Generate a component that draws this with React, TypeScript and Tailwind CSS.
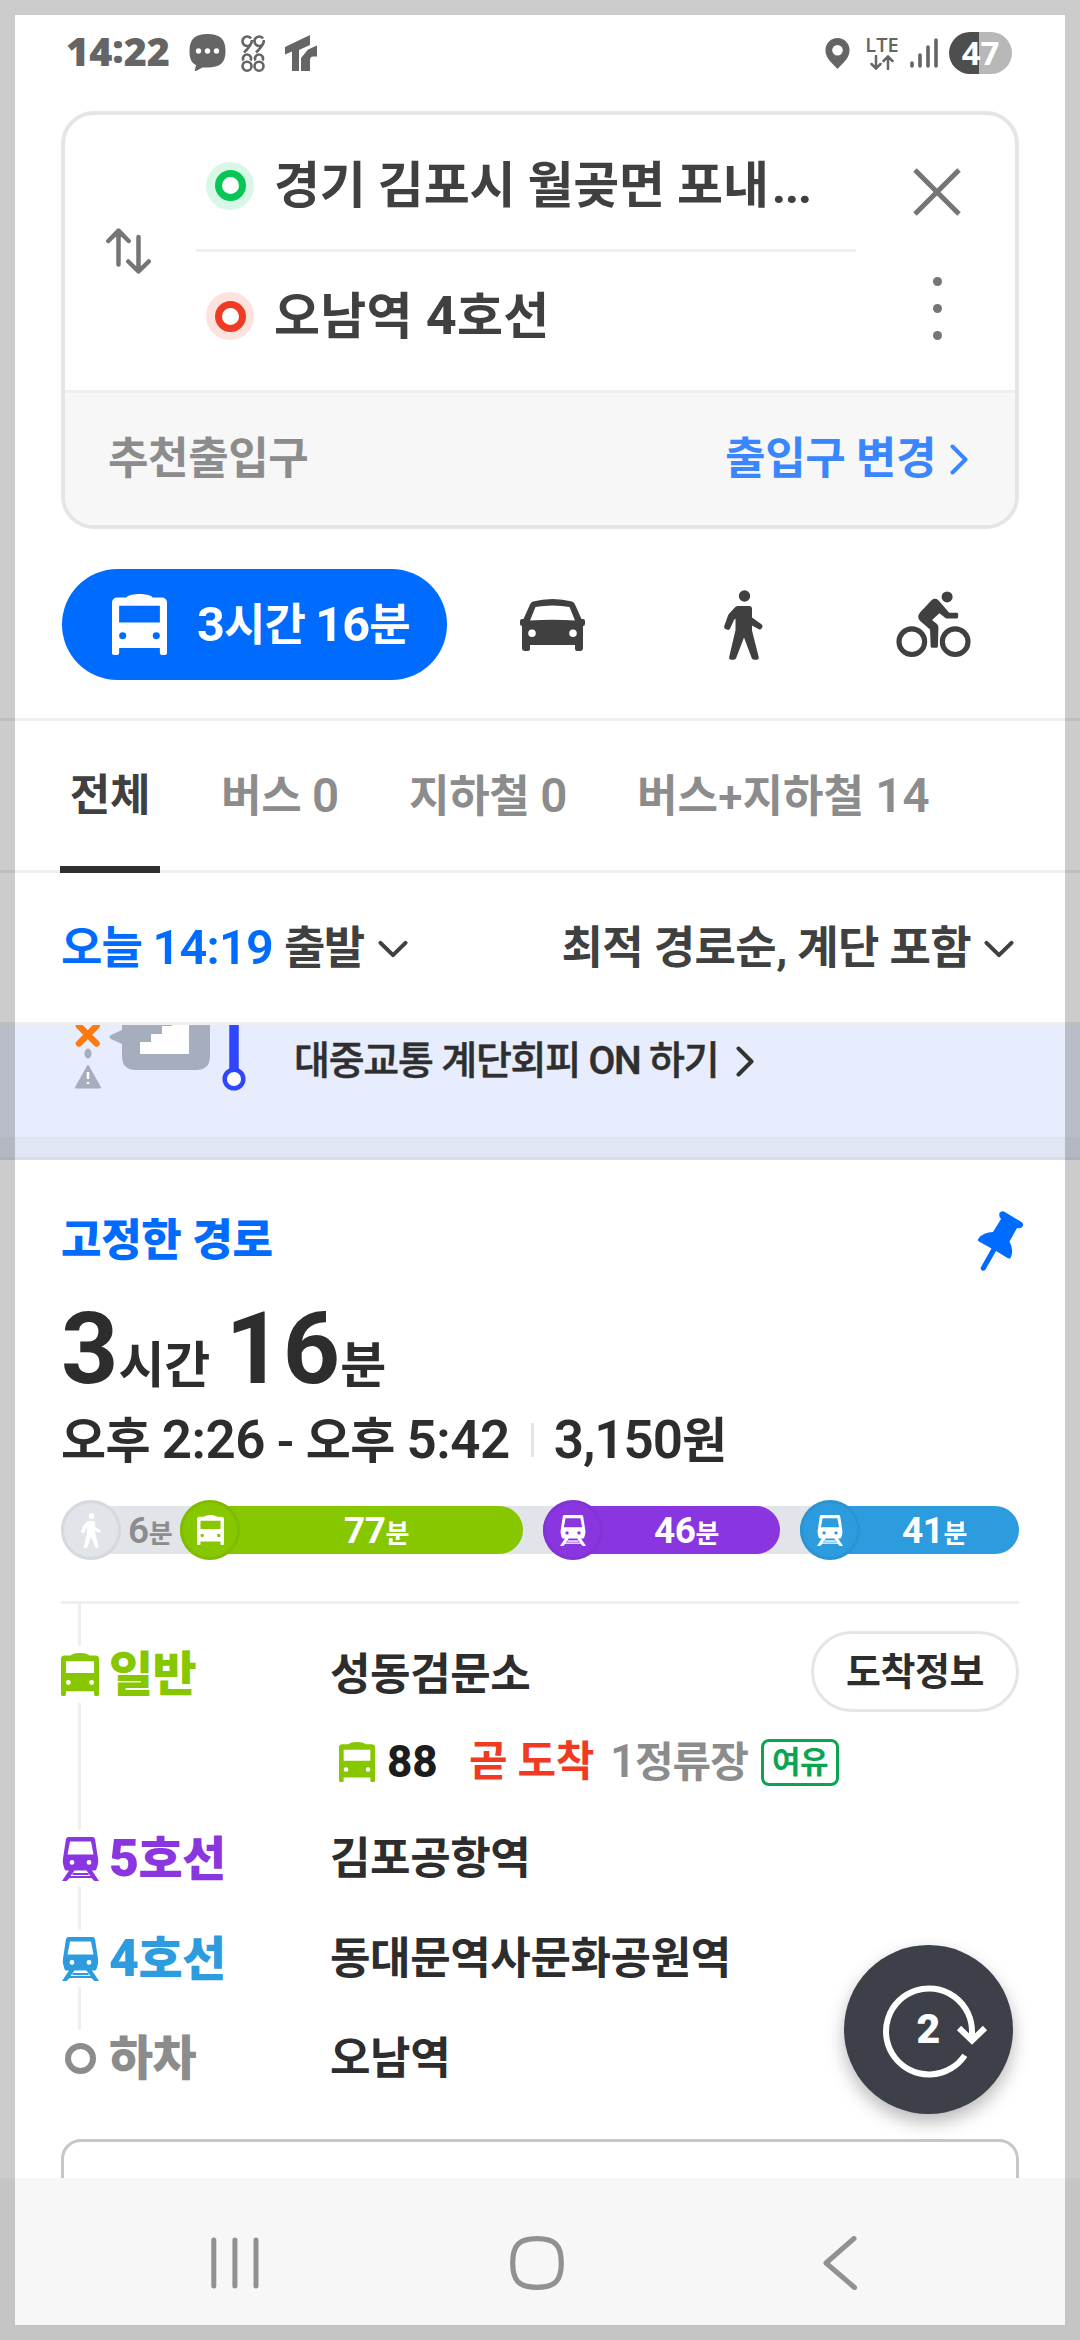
import type { ReactNode } from "react";

type IconProps = { className?: string };

function BusIcon({ className }: IconProps) {
  return (
    <svg viewBox="0 0 54 62" className={className} fill="currentColor" preserveAspectRatio="none">
      <path
        fillRule="evenodd"
        d="M14 3.500C16 1 22 0 27 0s11 1 13 3.500h9a5 5 0 0 1 5 5V60a2 2 0 0 1-2 2h-3a2 2 0 0 1-2-2v-5H7v5a2 2 0 0 1-2 2H2a2 2 0 0 1-2-2V8.500a5 5 0 0 1 5-5ZM7 12v17h40V12ZM10.500 39a3.500 3.500 0 1 0 0 7 3.500 3.500 0 0 0 0-7Zm33 0a3.500 3.500 0 1 0 0 7 3.500 3.500 0 0 0 0-7Z"
      />
    </svg>
  );
}

function TrainIcon({ className }: IconProps) {
  return (
    <svg viewBox="0 0 37 44" className={className} fill="currentColor">
      <path
        fillRule="evenodd"
        d="M6.500 0h24q2 0 2.500 2L36 21.500q.4 3-.2 6L34.500 32q-.5 1.500-2 1.500H30L37 44h-4.500l-3.200-3H7.700l-3.200 3H0l7-10.500H4.500q-1.500 0-2-1.500L1.200 27.500q-.6-3-.2-6L4 2Q4.500 0 6.500 0ZM8 4.500 5.500 17.500h26L29 4.500ZM10 23a2.400 2.400 0 1 0 0 4.800A2.400 2.400 0 0 0 10 23Zm17 0a2.400 2.400 0 1 0 0 4.800 2.400 2.400 0 0 0 0-4.800ZM12.500 33.500 8.500 39h20L24.500 33.500Z"
      />
      <path d="M10.500 36h16v2h-16Z" />
    </svg>
  );
}

function CarIcon({ className }: IconProps) {
  return (
    <svg viewBox="0 0 65 52" className={className} fill="currentColor">
      <path
        fillRule="evenodd"
        d="M13 2.500Q22 0 32.500 0T52 2.500q2 .5 3 3L61.500 20H63q2 0 2 2v3q0 2-2 2v22q0 3-3 3h-3q-2 0-2-2v-4H10v4q0 2-2 2H5q-3 0-3-3V27q-2 0-2-2v-3q0-2 2-2h1.500L10 5.500q1-2.500 3-3ZM15.500 8 10 21.500q11-.8 22.500-.8t22.500.8L49.500 8Q42 6.500 32.500 6.500T15.500 8ZM12 30.500a3.800 3.800 0 1 0 0 7.600 3.800 3.800 0 0 0 0-7.600Zm41 0a3.800 3.800 0 1 0 0 7.600 3.800 3.800 0 0 0 0-7.600Z"
      />
    </svg>
  );
}

function WalkIcon({ className }: IconProps) {
  return (
    <svg viewBox="0 0 39 70" className={className} fill="currentColor">
      <circle cx="20.500" cy="6" r="5.700" />
      <path d="M14 16h11q3 0 3 3v8.500l9.500 6.800q1.600 1.200.7 3l-.7 1.200q-1 1.500-2.600.7L28 35.500v5L34.700 67q.5 2.800-2 2.800h-2.500q-2 0-2.500-1.800L20 47.500 12.200 68q-.6 1.800-2.500 1.800H7.200q-2.500 0-2-2.800L11.500 40V28.500L10 30 6 38.800q-.8 1.500-2.500 1L1.300 39Q-.3 38 .2 36.200L4 25.500q.4-1 1.300-2l6-6.400Q12.500 16 14 16Z" />
    </svg>
  );
}

function BikeIcon({ className }: IconProps) {
  return (
    <svg viewBox="0 0 75 68" className={className} fill="currentColor">
      <circle cx="51.300" cy="6" r="5.600" />
      <path d="M35.500 9.300q3.500-3 7 0L53.500 22H61q1.500 0 1.500 1.500v3q0 1.500-1.500 1.500H51q-1 0-2-1l-5.500-4.500L36 29.500l5 4q1.500 1.300 1.500 3.500l-.5 19q0 1.700-1.700 1.700h-4q-1.700 0-1.700-1.700L34 39 24 30.500q-4-4 0-9Z" />
      <circle cx="15.500" cy="51.500" r="13" fill="none" stroke="currentColor" strokeWidth="5.200" />
      <circle cx="59.500" cy="51.500" r="13" fill="none" stroke="currentColor" strokeWidth="5.200" />
    </svg>
  );
}

function Chevron({ className }: IconProps) {
  return (
    <svg viewBox="0 0 18 31" className={className} fill="none" stroke="currentColor" strokeLinecap="round" strokeLinejoin="round">
      <path d="M2.500 2.500 15.500 15.500 2.500 28.500" strokeWidth="4" />
    </svg>
  );
}

function ChevronDown({ className }: IconProps) {
  return (
    <svg viewBox="0 0 30 18" className={className} fill="none" stroke="currentColor" strokeLinecap="round" strokeLinejoin="round">
      <path d="M2.500 2.800 15 15.200 27.500 2.800" strokeWidth="4" />
    </svg>
  );
}

// digits are set a little larger than the hangul next to them
function Mixed({ text }: { text: string }) {
  return (
    <span className="whitespace-pre">
      {text.split(/([0-9:,]+)/).map((part, i) =>
        i % 2 ? (
          <span key={i} className="text-[1.08em]">
            {part}
          </span>
        ) : (
          part
        )
      )}
    </span>
  );
}

function StatusBar() {
  return (
    <div className="flex h-[111px] items-start justify-between pl-[66px] pr-[68px] pt-[32px] font-['Open_Sans',sans-serif] text-[#656565]">
      <div className="flex h-[42px] items-center">
        <span className="w-[123px] pb-[3px] text-[39.500px] font-extrabold leading-none">
          14<span className="inline-block -translate-y-[3px]">:</span>22
        </span>
        <svg viewBox="0 0 37 38" className="mr-[15px] h-[38px] w-[37px]">
          <path
            fill="currentColor"
            d="M18.500 0C31 0 36.500 5 36.500 17S31 33.500 18.500 33.500q-3 0-5 0L7 37q-2 .5-1-1.500l1-4.500C2 28.500.5 24 .5 17 .5 5 6 0 18.500 0Z"
          />
          <g fill="#fff">
            <circle cx="9.500" cy="17" r="2.700" />
            <circle cx="18.500" cy="17" r="2.700" />
            <circle cx="27.500" cy="17" r="2.700" />
          </g>
        </svg>
        <svg viewBox="0 0 24 37" className="mr-[20px] h-[37px] w-[24px]" fill="none" stroke="currentColor" strokeWidth="2.600">
          <path d="M10 3.500A4.700 4.700 0 1 0 10 9M22 3.500A4.700 4.700 0 1 0 22 9M11 5q0 5-8 12.500M23 5q0 5-8 12.500" />
          <circle cx="6" cy="31.200" r="4.500" />
          <circle cx="18" cy="31.200" r="4.500" />
          <path d="M2.500 25.500A4 4 0 1 1 9.500 25.500M14.500 25.500A4 4 0 1 1 21.500 25.500" />
        </svg>
        <svg viewBox="0 0 32 36" className="h-[36px] w-[32px]" fill="currentColor">
          <path d="M0 12 25 0v10L14 15v21H7V16.500L0 19.500Z" />
          <path d="M32 10.500v11h-4q-3 0-3 4V36h-9V23l7-8.500Z" />
        </svg>
      </div>
      <div className="flex h-[42px] items-center">
        <svg viewBox="0 0 25 31" className="mr-[16px] h-[31px] w-[25px]">
          <path
            fill="currentColor"
            fillRule="evenodd"
            d="M12.500 0A12 12 0 0 0 .5 12.500c0 8 8 14 12 18.500 4-4.500 12-10.500 12-18.500A12 12 0 0 0 12.500 0Zm0 7a5.300 5.300 0 1 1 0 10.600 5.300 5.300 0 0 1 0-10.600Z"
          />
        </svg>
        <div className="mr-[12px] flex w-[32px] flex-col items-center">
          <span className="text-[20px] font-semibold leading-[17px]">LTE</span>
          <svg viewBox="0 0 24 15" className="mt-[2px] h-[15px] w-[24px]" fill="none" stroke="currentColor" strokeWidth="2.500" strokeLinecap="round">
            <path d="M6 1v12M1.500 9 6 13.500 10.500 9M18 14V2M13.500 6 18 1.500 22.500 6" />
          </svg>
        </div>
        <svg viewBox="0 0 28 30" className="mr-[11px] h-[30px] w-[28px]" stroke="currentColor" strokeWidth="3.600" strokeLinecap="round">
          <path d="M2 25v3M10 17v11M18 9v19M26 2v26" />
        </svg>
        <div className="flex h-[42px] w-[63px] items-center justify-center rounded-full bg-[linear-gradient(90deg,#4e4e4e_30px,#b8b8b8_30px)] pb-[2px] text-[33px] font-bold leading-none text-white">
          47
        </div>
      </div>
    </div>
  );
}

function SearchCard() {
  return (
    <div className="mx-[61px] flex h-[418px] flex-col overflow-hidden rounded-[33px] border-4 border-[#e5e5e5]">
      <div className="flex h-[275px] text-[50px] font-bold leading-none tracking-[-0.2px] text-[#404040]">
        <div className="flex w-[131px] flex-col pl-[40px] pt-[113px]">
          <svg viewBox="0 0 46 46" className="size-[46px]" fill="none" stroke="#757575" strokeWidth="4.500" strokeLinecap="round" strokeLinejoin="round">
            <path d="M13.500 36.500V3M3.300 13 13.500 2.700 23.700 13M33.500 9v34M23.300 33.500 33.500 43.500 43.700 33.500" />
          </svg>
        </div>
        <div className="flex w-[660px] flex-col">
          <div className="flex h-[134px] items-center pl-[10px] pt-[7px]">
            <span className="mr-[20px] flex size-[48px] items-center justify-center rounded-full bg-[#d9f7e6]">
              <span className="size-[31px] rounded-full border-[7px] border-[#06c755] bg-white" />
            </span>
            <span className="whitespace-nowrap">
              경기 김포시 월곶면 포내<span className="ml-[3px] tracking-[-1.500px]">...</span>
            </span>
          </div>
          <div className="h-[3px] shrink-0 bg-[#efefef]" />
          <div className="flex h-[128px] items-center pl-[10px]">
            <span className="mr-[20px] flex size-[48px] items-center justify-center rounded-full bg-[#fde2de]">
              <span className="size-[31px] rounded-full border-[7px] border-[#f03a24] bg-white" />
            </span>
            <span className="tracking-[0.3px]">
              <Mixed text="오남역 4호선" />
            </span>
          </div>
        </div>
        <div className="flex flex-1 flex-col items-center pl-[3px] pt-[53px]">
          <svg viewBox="0 0 48 48" className="size-[48px]" stroke="#757575" strokeWidth="5">
            <path d="M2 2 46 46M46 2 2 46" />
          </svg>
          <div className="mt-[61px] flex flex-col gap-[18px]">
            <span className="size-[9px] rounded-full bg-[#757575]" />
            <span className="size-[9px] rounded-full bg-[#757575]" />
            <span className="size-[9px] rounded-full bg-[#757575]" />
          </div>
        </div>
      </div>
      <div className="flex flex-1 items-center justify-between border-t-[3px] border-[#efefef] bg-[#f7f7f7] pl-[43px] pr-[47px] text-[44px] font-bold leading-none tracking-[-0.4px]">
        <span className="text-[#8c8c8c]">추천출입구</span>
        <span className="flex items-center text-[#3a86ff]">
          출입구 변경
          <Chevron className="ml-[14px] h-[31px] w-[18px]" />
        </span>
      </div>
    </div>
  );
}

function ModeBar() {
  return (
    <div className="flex h-[192px] items-start border-b-[3px] border-[#efefef] pl-[62px] pt-[40px] text-[#404040]">
      <button className="flex h-[111px] w-[385px] items-center rounded-full bg-[#006bff] pl-[50px] text-[45px] font-bold leading-none tracking-[-0.9px] text-white">
        <BusIcon className="mr-[30px] h-[61px] w-[55px]" />
        <span className="pt-[2px]">
          <Mixed text="3시간 16분" />
        </span>
      </button>
      <CarIcon className="ml-[73px] mt-[30px] h-[52px] w-[65px]" />
      <WalkIcon className="ml-[139px] mt-[21px] h-[70px] w-[39px]" />
      <BikeIcon className="ml-[133px] mt-[22px] h-[67px] w-[75px]" />
    </div>
  );
}

function Tabs() {
  return (
    <div className="flex h-[152px] border-b-[3px] border-[#efefef] pl-[60px] text-[44px] font-semibold leading-none tracking-[-0.3px] text-[#8c8c8c]">
      <div className="-mb-[3px] flex w-[100px] items-center justify-center border-b-[7px] border-[#2f2f2f] pt-[5px] font-bold text-[#404040]">
        전체
      </div>
      <div className="flex w-[187px] items-center pl-[61px] pt-[2px]">
        <Mixed text="버스 0" />
      </div>
      <div className="flex w-[228px] items-center pl-[62px] pt-[2px]">
        <Mixed text="지하철 0" />
      </div>
      <div className="flex items-center pl-[62px] pt-[2px] tracking-[0.1px]">
        <Mixed text="버스+지하철 14" />
      </div>
    </div>
  );
}

function FilterRow() {
  return (
    <div className="flex h-[152px] items-center justify-between border-b-[3px] border-[#efefef] pl-[61px] pr-[66px] pt-[2px] text-[45px] font-bold leading-none tracking-[-0.6px] text-[#404040]">
      <span className="flex items-center">
        <span className="mr-[11px] font-semibold tracking-[-0.8px] text-[#006bff]">
          <Mixed text="오늘 14:19" />
        </span>
        <span className="tracking-[-1.500px]">출발</span>
        <ChevronDown className="ml-[14px] h-[18px] w-[30px]" />
      </span>
      <span className="flex items-center">
        최적 경로순, 계단 포함
        <ChevronDown className="ml-[13px] h-[18px] w-[30px]" />
      </span>
    </div>
  );
}

function Banner() {
  return (
    <div className="flex h-[135px] flex-col bg-[#e7edfc]">
      <div className="flex h-[112px] items-start">
        <svg viewBox="0 0 200 90" className="ml-[60px] h-[90px] w-[200px]">
          <path d="M19 1 36.500 18.500M36.500 1 19 18.500" stroke="#ff7a0d" strokeWidth="6.500" strokeLinecap="round" />
          <ellipse cx="28" cy="28.500" rx="3.500" ry="5" fill="#a6adbd" />
          <path d="M28 41 40 62.500H16Z" fill="#a6adbd" stroke="#a6adbd" strokeWidth="2" strokeLinejoin="round" />
          <path d="M28 47v7M28 57v2" stroke="#fff" strokeWidth="2.500" />
          <path d="M62 0h88v31q0 14-14 14H76q-14 0-14-14V19L51 14q-3-2 0-4l11-5Z" fill="#a6adbd" />
          <path d="M112 0v1h-10v8H91v8H80v12h49V0Z" fill="#fff" />
          <path d="M174 0v44" stroke="#2f46ff" strokeWidth="9.500" />
          <circle cx="174" cy="54" r="9.300" fill="#fff" stroke="#2f46ff" strokeWidth="4.500" />
        </svg>
        <span className="ml-[34px] mt-[17px] text-[39px] font-medium leading-none tracking-[-1.200px] text-[#2f2f2f] [-webkit-text-stroke:0.5px_#2f2f2f]">
          대중교통 계단회피 ON 하기
        </span>
        <Chevron className="ml-[18px] mt-[21px] h-[31px] w-[18px] text-[#333]" />
      </div>
      <div className="h-[20px] bg-[#e0e6f3]" />
      <div className="h-[3px] bg-[#d8deea]" />
    </div>
  );
}

function Segment({ icon, time, circle, bar }: { icon: ReactNode; time: number; circle: string; bar: string }) {
  return (
    <div className={`flex h-[48px] items-center rounded-full text-white ${bar}`}>
      <span className={`flex size-[60px] shrink-0 items-center justify-center rounded-full border-[3px] border-black/5 ${circle}`}>
        {icon}
      </span>
      <span className="flex flex-1 items-baseline justify-center pr-[10px] text-[37px] font-bold leading-none tracking-[-0.5px]">
        {time}
        <span className="text-[26px]">분</span>
      </span>
    </div>
  );
}

function TimeBar() {
  return (
    <div className="relative mt-[29px] flex h-[60px] items-center">
      <div className="absolute left-[30px] right-[30px] top-[6px] h-[48px] bg-[#e1e4e9]" />
      <div className="relative flex flex-1 items-center">
        <span className="flex size-[60px] items-center justify-center rounded-full border-[3px] border-[#d6d8de] bg-[#e1e4e9]">
          <WalkIcon className="h-[35px] w-[20px] text-white" />
        </span>
        <span className="w-[59px] pl-[7px] text-[37px] font-semibold leading-none tracking-[-0.5px] text-[#8c8c8c]">
          6<span className="text-[26px] font-bold">분</span>
        </span>
        <Segment
          time={77}
          icon={<BusIcon className="h-[30px] w-[27px]" />}
          circle="bg-[#86c700]"
          bar="w-[343px] bg-[#86c700] mr-[20px]"
        />
        <Segment
          time={46}
          icon={<TrainIcon className="h-[31px] w-[26px]" />}
          circle="bg-[#8936e0]"
          bar="w-[237px] bg-[#8936e0] mr-[20px]"
        />
        <Segment
          time={41}
          icon={<TrainIcon className="h-[31px] w-[26px]" />}
          circle="bg-[#2d9cdf]"
          bar="w-[219px] bg-[#2d9cdf]"
        />
      </div>
    </div>
  );
}

function Leg({ icon, line, color, station, children }: { icon: ReactNode; line: string; color: string; station: string; children?: ReactNode }) {
  return (
    <div className="flex h-[57px] items-center">
      <span className={`flex w-[38px] shrink-0 justify-center ${color}`}>{icon}</span>
      <span className={`w-[231px] pl-[10px] text-[48px] font-black leading-none tracking-[-0.6px] ${color}`}>
        <Mixed text={line} />
      </span>
      <span className="flex-1 pt-[1px] text-[44px] font-bold leading-none tracking-[-0.4px]">{station}</span>
      {children}
    </div>
  );
}

function Rail({ className }: { className: string }) {
  return <div className={`ml-[17px] w-[3px] shrink-0 bg-[#efefef] ${className}`} />;
}

function RouteDetail() {
  return (
    <div className="mt-[41px] border-t-[3px] border-[#efefef]">
      <Rail className="h-[42px]" />
      <Leg
        icon={<BusIcon className="h-[43px] w-[38px]" />}
        line="일반"
        color="text-[#86c700]"
        station="성동검문소"
      >
        <button className="-mt-[6px] flex h-[81px] w-[208px] shrink-0 items-center justify-center rounded-full border-[3px] border-[#e5e5e5] text-[38px] font-bold leading-none tracking-[-0.5px]">
          도착정보
        </button>
      </Leg>
      <div className="flex h-[127px] items-start">
        <Rail className="h-[127px]" />
        <div className="ml-[258px] mt-[36px] flex h-[47px] items-center text-[42px] leading-none">
          <BusIcon className="-mt-[2px] mr-[12px] h-[40px] w-[36px] text-[#86c700]" />
          <span className="-mt-[2px] w-[82px] text-[44px] font-extrabold text-[#1c1c1c]">88</span>
          <span className="-mt-[2px] w-[141px] font-bold tracking-[-0.3px] text-[#f03a24]">곧 도착</span>
          <span className="-mt-[2px] w-[151px] font-semibold tracking-[-1px] text-[#8c8c8c]">
            <Mixed text="1정류장" />
          </span>
          <span className="flex h-[47px] w-[78px] items-center justify-center rounded-[8px] border-[3px] border-[#0aa551] text-[31px] font-bold tracking-[-0.5px] text-[#0aa551]">
            여유
          </span>
        </div>
      </div>
      <Leg icon={<TrainIcon className="h-[44px] w-[37px]" />} line="5호선" color="text-[#8936e0]" station="김포공항역" />
      <Rail className="h-[43px]" />
      <Leg icon={<TrainIcon className="h-[44px] w-[37px]" />} line="4호선" color="text-[#2d9cdf]" station="동대문역사문화공원역" />
      <Rail className="h-[43px]" />
      <Leg
        icon={<span className="size-[31px] rounded-full border-[6.500px] border-[#8c8c8c]" />}
        line="하차"
        color="text-[#8c8c8c]"
        station="오남역"
      />
    </div>
  );
}

function RouteCard() {
  return (
    <div className="h-[1018px] overflow-hidden px-[61px] text-[#2d2d2d]">
      <div className="mt-[51px] flex h-[60px] items-center justify-between">
        <span className="text-[44px] font-black leading-none tracking-[-0.3px] text-[#006bff]">고정한 경로</span>
        <svg viewBox="0 0 45 60" className="-mr-[4px] h-[60px] w-[45px]" fill="#006bff">
          <path d="M21.500 2q1.500-2.500 4.500-1.500L43.500 11q2.500 1.800 1 4.500-1 2-4 1.800L39 17l-7.500 13.500q4.500 8 1.500 15.500-1 2.500-3.500 1L18 40 7.500 58.500Q6 60.500 4 59.500 2 58 3 56L13.500 37.500 1 30.500q-1.800-1.300-.5-3 5-6.500 14.500-6.500L23 8q-2.500-3-1.500-6Z" />
        </svg>
      </div>
      <div className="mt-[28px] flex h-[100px] items-baseline text-[50px] font-bold leading-[100px]">
        <span className="text-[100px]">3</span>
        시간
        <span className="ml-[15px] text-[100px]">16</span>분
      </div>
      <div className="mt-[8px] flex h-[64px] items-center pt-[2px] text-[49px] font-semibold leading-none">
        <span className="tracking-[-0.5px]">
          <Mixed text="오후 2:26 - 오후 5:42" />
        </span>
        <span className="ml-[21px] mr-[20px] h-[34px] w-[3px] bg-[#e5e5e5]" />
        <span className="tracking-[-1px]">
          <Mixed text="3,150원" />
        </span>
      </div>
      <TimeBar />
      <RouteDetail />
      <div className="mt-[52px] h-[120px] rounded-[20px] border-[3px] border-[#c6c6c6]" />
    </div>
  );
}

function RefreshButton() {
  return (
    <button className="absolute left-[844px] top-[1945px] flex size-[169px] items-center justify-center rounded-full bg-[#3d4048] text-[41px] font-black leading-none text-white shadow-[0_8px_18px_rgba(0,0,0,0.28)]">
      <svg viewBox="-60 -60 120 120" className="absolute size-[120px]" fill="none" stroke="#fff" strokeWidth="6">
        <path d="M35.800 25.300A43 43 0 1 1 43 2v8" />
        <path d="M30-2 43 10.500 56-2" />
      </svg>
      2
    </button>
  );
}

function NavBar() {
  return (
    <div className="flex h-[162px] items-start bg-[#f7f7f7] pt-[58px]">
      <svg viewBox="0 0 50 54" className="ml-[210px] h-[54px] w-[50px]" stroke="#919191" strokeWidth="5" strokeLinecap="round">
        <path d="M3.800 4v46M24.900 4v46M46 4v46" />
      </svg>
      <svg viewBox="0 0 54 54" className="ml-[250px] size-[54px]" fill="none" stroke="#919191" strokeWidth="5.200">
        <path d="M27 2.700C45 2.700 51.300 9 51.300 27S45 51.300 27 51.300 2.700 45 2.700 27 9 2.700 27 2.700Z" />
      </svg>
      <svg viewBox="0 0 34 54" className="ml-[259px] h-[54px] w-[34px]" fill="none" stroke="#919191" strokeWidth="5" strokeLinecap="round" strokeLinejoin="round">
        <path d="M31 2.500 3 27 31.500 51.500" />
      </svg>
    </div>
  );
}

export default function App() {
  return (
    <div className="relative h-[2340px] w-[1080px] overflow-hidden bg-white font-['Roboto','Noto_Sans_CJK_KR',sans-serif]">
      <StatusBar />
      <SearchCard />
      <ModeBar />
      <Tabs />
      <FilterRow />
      <Banner />
      <RouteCard />
      <NavBar />
      <RefreshButton />
      <div className="pointer-events-none absolute inset-0 border-[15px] border-black/20" />
    </div>
  );
}
